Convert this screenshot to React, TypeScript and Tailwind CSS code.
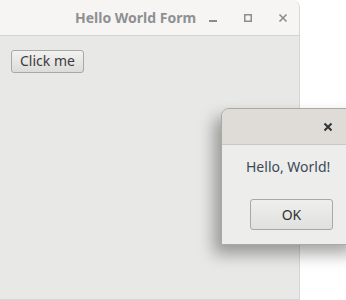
import React from "react";

const font = { fontFamily: '"Noto Sans", "Open Sans", "DejaVu Sans", sans-serif' };

function MainWindow() {
  return (
    <div className="w-[300px] h-[300px] flex flex-col bg-[#e8e8e7] rounded-tr-[8px] border-r border-b border-[#d6d6d4] overflow-hidden">
      <div className="h-[36px] shrink-0 flex items-center bg-[#f6f5f4] border-b border-[#d4d2cf]">
        <div className="pl-[75px] w-[207px] text-[14px] font-bold text-[#8e9192] leading-none">
          Hello World Form
        </div>
        <div className="flex items-center gap-[23px]">
          <svg width="12" height="12" viewBox="0 0 12 12">
            <rect x="2" y="8" width="8" height="2" fill="#8a8d8e" />
          </svg>
          <svg width="12" height="12" viewBox="0 0 12 12">
            <rect x="2.75" y="2.75" width="6.5" height="6.5" fill="none" stroke="#8a8d8e" strokeWidth="1.5" />
          </svg>
          <svg width="12" height="12" viewBox="0 0 12 12">
            <path d="M2.5 2.5 L9.5 9.5 M9.5 2.5 L2.5 9.5" stroke="#8a8d8e" strokeWidth="1.6" />
          </svg>
        </div>
      </div>
      <div className="px-[11px] pt-[12px]">
        <button className="h-[23px] px-[8px] rounded-[3px] border border-[#a8a8a5] bg-gradient-to-b from-[#f2f2f1] to-[#dcdcda] text-[14px] text-[#3c3c3c] leading-none">
          Click me
        </button>
      </div>
    </div>
  );
}

function Dialog() {
  return (
    <div className="absolute left-[221px] top-[108px] w-[140px] h-[137px] flex flex-col bg-[#ededeb] border border-[#a9a9a6] rounded-tl-[8px] shadow-[-7px_9px_16px_rgba(0,0,0,0.35)] overflow-hidden">
      <div className="h-[36px] shrink-0 bg-[#dfdcd8] border-b border-[#cac7c3] flex items-center">
        <div className="ml-[100px]">
          <svg width="12" height="12" viewBox="0 0 12 12">
            <path d="M2.5 2.5 L9.5 9.5 M9.5 2.5 L2.5 9.5" stroke="#2e3436" strokeWidth="2" />
          </svg>
        </div>
      </div>
      <div className="pl-[24px] pt-[15px] text-[14px] text-[#3b4a58] leading-none">Hello, World!</div>
      <div className="pl-[28px] pt-[25px]">
        <button className="w-[83px] h-[31px] rounded-[3px] border border-[#a8a8a5] bg-gradient-to-b from-[#efefee] to-[#e0e0de] text-[14px] text-[#2e3436] leading-none">
          OK
        </button>
      </div>
    </div>
  );
}

export default function App() {
  return (
    <div className="relative w-[346px] h-[300px] bg-white overflow-hidden" style={font}>
      <MainWindow />
      <Dialog />
    </div>
  );
}
